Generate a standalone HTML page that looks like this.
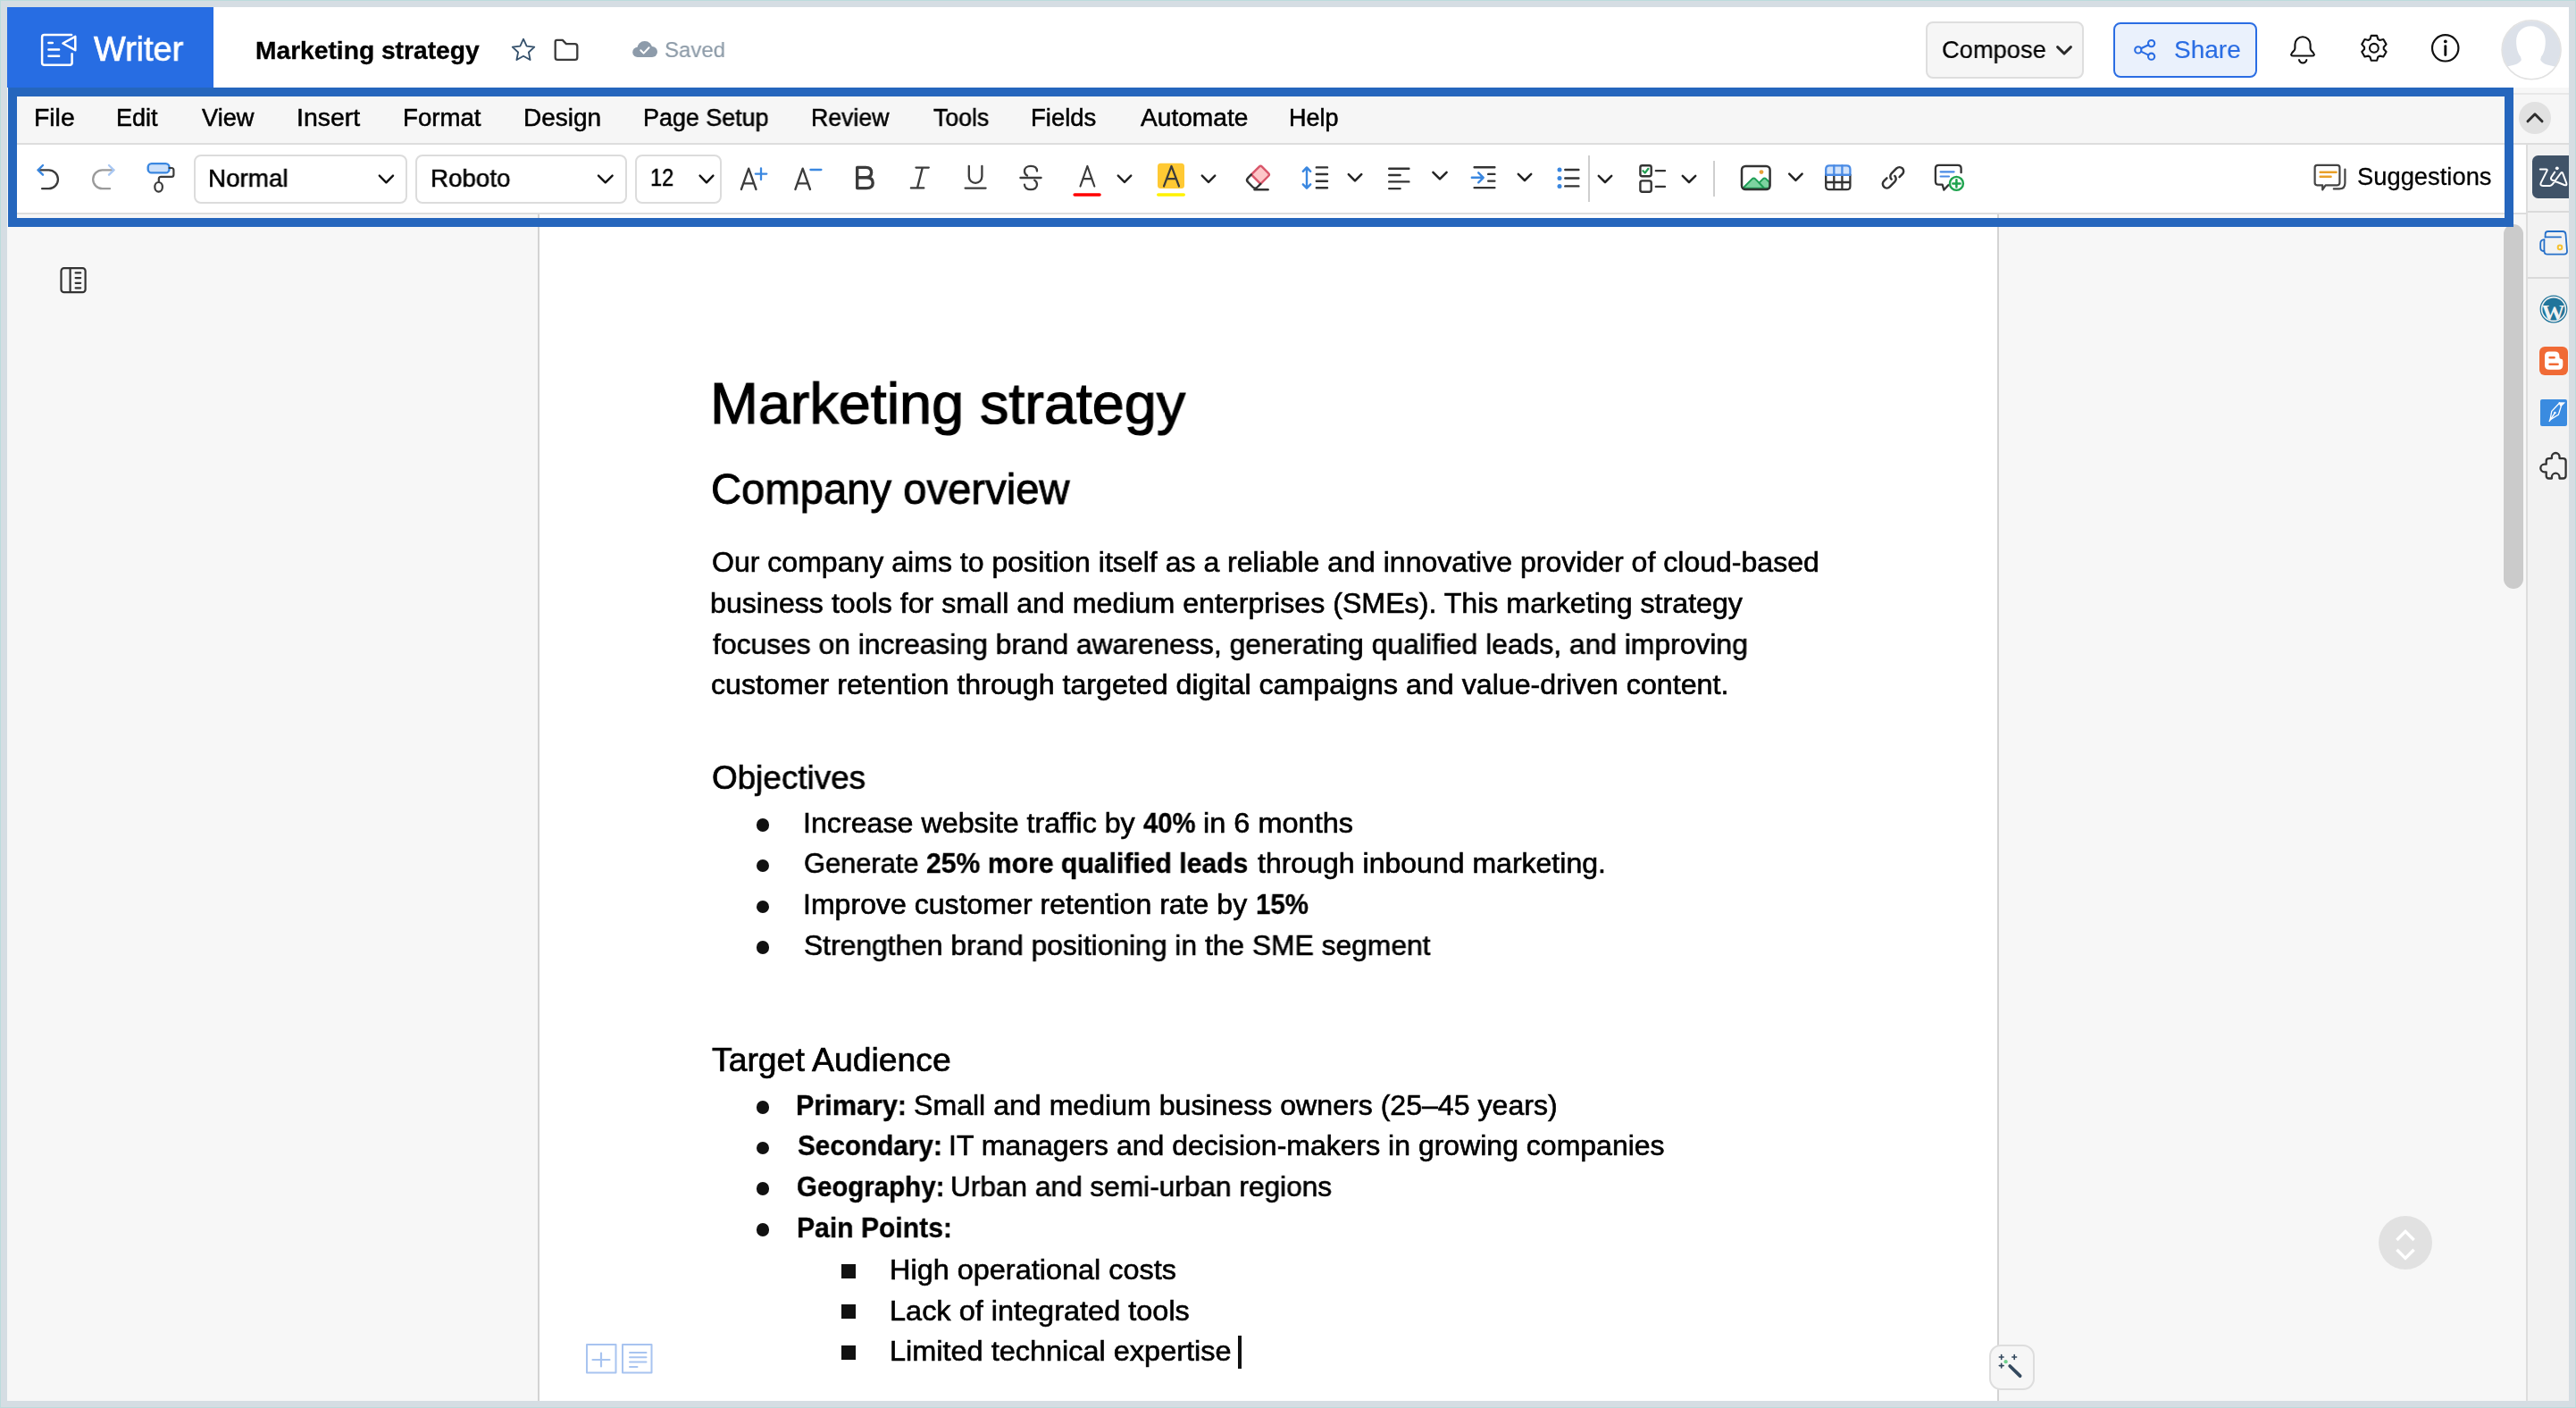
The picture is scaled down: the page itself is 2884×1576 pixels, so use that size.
<!DOCTYPE html>
<html><head><meta charset="utf-8"><title>Marketing strategy - Writer</title>
<style>
html,body{margin:0;padding:0;width:2884px;height:1576px;overflow:hidden;background:#D5DDE3;font-family:"Liberation Sans", sans-serif;}
.a{position:absolute;}
.t{position:absolute;white-space:nowrap;will-change:transform;transform-origin:0 0;}
b{font-weight:bold;}
svg{position:absolute;overflow:visible;}
</style></head><body>
<div class="a" style="left:0;top:0;width:2884px;height:1576px;box-sizing:border-box;border:1px solid #BCDCDC;"></div>
<!-- app area -->
<div class="a" style="left:8px;top:8px;width:2868px;height:1560px;background:#F7F7F7;"></div>
<!-- header -->
<div class="a" style="left:8px;top:8px;width:2868px;height:90px;background:#fff;"></div>
<div class="a" style="left:8px;top:8px;width:231px;height:90px;background:#276DE3;"></div>
<!-- compose button -->
<div class="a" style="left:2155.5px;top:24px;width:177.5px;height:64px;box-sizing:border-box;background:#F6F6F6;border:2px solid #DEDEDE;border-radius:8px;"></div>
<!-- share button -->
<div class="a" style="left:2366px;top:25px;width:161px;height:62px;box-sizing:border-box;background:#EAF1FC;border:2px solid #2A6DE3;border-radius:8px;"></div>
<!-- right strip next to outline -->
<div class="a" style="left:2814px;top:104px;width:62px;height:2px;background:#E8E8E8;"></div>
<div class="a" style="left:2814px;top:106px;width:62px;height:54px;background:#F6F6F6;"></div>
<div class="a" style="left:2814px;top:160px;width:62px;height:2px;background:#DDDDDD;"></div>
<div class="a" style="left:2820px;top:114px;width:36px;height:36px;border-radius:50%;background:#E1E1E1;"></div>
<!-- toolbar region right of outline (white) -->
<div class="a" style="left:2814px;top:162px;width:14px;height:76px;background:#fff;"></div>
<div class="a" style="left:2814px;top:238px;width:14px;height:2px;background:#DDDDDD;"></div>
<!-- right sidebar -->
<div class="a" style="left:2828px;top:162px;width:2px;height:1406px;background:#DDDDDD;"></div>
<div class="a" style="left:2830px;top:162px;width:46px;height:1406px;background:#F2F2F2;"></div>
<div class="a" style="left:2830px;top:236px;width:46px;height:2px;background:#DADADA;"></div>
<div class="a" style="left:2830px;top:310px;width:46px;height:2px;background:#DADADA;"></div>
<!-- page -->
<div class="a" style="left:602px;top:240px;width:2px;height:1328px;background:#D3D3D3;"></div>
<div class="a" style="left:604px;top:240px;width:1632px;height:1328px;background:#fff;"></div>
<div class="a" style="left:2236px;top:240px;width:2px;height:1328px;background:#D3D3D3;"></div>
<!-- scrollbar -->
<div class="a" style="left:2803px;top:251px;width:22px;height:408px;border-radius:11px;background:#CBCBCB;"></div>
<!-- toolbar outline block -->
<div class="a" style="left:19px;top:108px;width:2785px;height:52px;background:#F6F6F6;"></div>
<div class="a" style="left:19px;top:160px;width:2785px;height:2px;background:#DDDDDD;"></div>
<div class="a" style="left:19px;top:162px;width:2785px;height:76px;background:#fff;"></div>
<div class="a" style="left:19px;top:238px;width:2785px;height:2px;background:#DDDDDD;"></div>
<div class="a" style="left:9px;top:98px;width:2805px;height:156px;box-sizing:border-box;border:10px solid #2566BD;"></div>
<!-- dropdowns -->
<div class="a" style="left:216.5px;top:172.5px;width:239px;height:55px;box-sizing:border-box;border:2px solid #DCDCDC;border-radius:8px;"></div>
<div class="a" style="left:464.5px;top:172.5px;width:237px;height:55px;box-sizing:border-box;border:2px solid #DCDCDC;border-radius:8px;"></div>
<div class="a" style="left:710.5px;top:172.5px;width:97px;height:55px;box-sizing:border-box;border:2px solid #DCDCDC;border-radius:8px;"></div>
<!-- separators in toolbar -->
<div class="a" style="left:1778px;top:174px;width:2px;height:52px;background:#CFCFCF;"></div>
<div class="a" style="left:1917.5px;top:180px;width:2px;height:40px;background:#CFCFCF;"></div>
<!-- zia block -->
<div class="a" style="left:2835px;top:174px;width:41px;height:48px;background:#405368;border-radius:6.5px 0 0 6.5px;"></div>
<!-- blogger, pen bg -->
<div class="a" style="left:2843px;top:388px;width:32px;height:32px;background:#F06A35;border-radius:6px;"></div>
<div class="a" style="left:2844px;top:447px;width:30px;height:30px;background:#3A8BE0;border-radius:2px;"></div>
<!-- nav circle -->
<div class="a" style="left:2663px;top:1361px;width:60px;height:60px;border-radius:50%;background:#E1E1E1;"></div>
<!-- magic wand button -->
<div class="a" style="left:2226.5px;top:1505px;width:51px;height:51px;box-sizing:border-box;border:2px solid #DDDDDD;border-radius:13px;background:#F6F6F6;"></div>
<!-- bullets -->
<div class="a" style="left:846.5px;top:916px;width:14.5px;height:14.5px;border-radius:50%;background:#111;"></div>
<div class="a" style="left:846.5px;top:961.6px;width:14.5px;height:14.5px;border-radius:50%;background:#111;"></div>
<div class="a" style="left:846.5px;top:1007.5px;width:14.5px;height:14.5px;border-radius:50%;background:#111;"></div>
<div class="a" style="left:846.5px;top:1053.4px;width:14.5px;height:14.5px;border-radius:50%;background:#111;"></div>
<div class="a" style="left:846.5px;top:1232px;width:14.5px;height:14.5px;border-radius:50%;background:#111;"></div>
<div class="a" style="left:846.5px;top:1277.5px;width:14.5px;height:14.5px;border-radius:50%;background:#111;"></div>
<div class="a" style="left:846.5px;top:1323.2px;width:14.5px;height:14.5px;border-radius:50%;background:#111;"></div>
<div class="a" style="left:846.5px;top:1369.2px;width:14.5px;height:14.5px;border-radius:50%;background:#111;"></div>
<div class="a" style="left:942px;top:1414.5px;width:16px;height:16px;background:#111;"></div>
<div class="a" style="left:942px;top:1460px;width:16px;height:16px;background:#111;"></div>
<div class="a" style="left:942px;top:1505.5px;width:16px;height:16px;background:#111;"></div>
<!-- cursor -->
<div class="a" style="left:1386px;top:1495px;width:3.5px;height:37px;background:#111;"></div>

<svg style="left:0;top:0" width="2884" height="1576" viewBox="0 0 2884 1576" fill="none" stroke-linecap="round" stroke-linejoin="round">
<!-- logo -->
<g stroke="#fff" stroke-width="2.5">
<path d="M80.1,39 H49.6 Q47.1,39 47.1,41.5 V70.3 Q47.1,72.8 49.6,72.8 H78.1 Q80.6,72.8 80.6,70.3 V60.2"/>
<path d="M70.4,48.5 L84.3,40.8 L84.3,56.2 Z"/>
<path d="M54.4,48.1 H58.8 M54.4,55.5 H66.1 M54.4,62.7 H66.1"/>
</g>
<!-- star folder cloud -->
<path d="M586.00,43.70 L589.64,51.58 L598.27,52.61 L591.90,58.52 L593.58,67.04 L586.00,62.80 L578.42,67.04 L580.10,58.52 L573.73,52.61 L582.36,51.58 Z" stroke="#34506B" stroke-width="1.8"/>
<path d="M623.5,44.9 H629.8 L633.9,49.1 H643.6 Q646.3,49.1 646.3,51.8 V64.2 Q646.3,66.9 643.6,66.9 H624.4 Q621.7,66.9 621.7,64.2 V46.7 Q621.7,44.9 623.5,44.9 Z" stroke="#3A3A3A" stroke-width="2.3"/>
<g fill="#8D9BAA"><circle cx="713.8" cy="58.4" r="5.6"/><circle cx="721.8" cy="54.6" r="8.5"/><circle cx="730" cy="58" r="6"/><rect x="713.8" y="55" width="16.2" height="9"/></g>
<path d="M717.3,56.3 L720.6,59.6 L726.6,53.3" stroke="#fff" stroke-width="2"/>
<!-- compose chevron -->
<path d="M2303.6,52.6 L2311,60 L2318.4,52.6" stroke="#2a2a2a" stroke-width="3"/>
<!-- share icon -->
<g stroke="#2A6DE3" stroke-width="2.1"><circle cx="2408.6" cy="48.6" r="3.6"/><circle cx="2393.8" cy="55.9" r="3.6"/><circle cx="2408.6" cy="63.2" r="3.6"/>
<path d="M2397,54.2 L2405.4,50.2 M2397,57.6 L2405.4,61.6"/></g>
<!-- bell -->
<path d="M2569.4,54 V49.8 A8.6,8.6 0 0 1 2586.6,49.8 V54 Q2586.6,55.6 2588,57 L2589.8,59 Q2592.3,62.5 2588.5,62.5 H2567.5 Q2563.7,62.5 2566.2,59 L2568,57 Q2569.4,55.6 2569.4,54 Z" stroke="#111" stroke-width="2.1"/>
<path d="M2574,67 A4.3,4.3 0 0 0 2582.4,67" stroke="#111" stroke-width="2"/>
<!-- gear -->
<path d="M2653.47,43.84 L2654.68,39.87 L2661.12,39.87 L2662.33,43.84 L2664.31,44.98 L2668.36,44.05 L2671.58,49.62 L2668.74,52.66 L2668.74,54.94 L2671.58,57.98 L2668.36,63.55 L2664.31,62.62 L2662.33,63.76 L2661.12,67.73 L2654.68,67.73 L2653.47,63.76 L2651.49,62.62 L2647.44,63.55 L2644.22,57.98 L2647.06,54.94 L2647.06,52.66 L2644.22,49.62 L2647.44,44.05 L2651.49,44.98 Z" stroke="#111" stroke-width="2.1"/>
<circle cx="2657.9" cy="53.8" r="4.9" stroke="#111" stroke-width="2.1"/>
<!-- info -->
<circle cx="2737.7" cy="53.8" r="14.7" stroke="#111" stroke-width="2.2"/>
<circle cx="2737.8" cy="46.4" r="1.9" fill="#111"/>
<path d="M2737.8,51.6 V61.6" stroke="#111" stroke-width="2.9"/>
<!-- avatar -->
<defs><clipPath id="avc"><circle cx="2834.1" cy="55.8" r="32.6"/></clipPath></defs>
<circle cx="2834.1" cy="55.8" r="32.6" fill="#DCE1E9"/>
<path clip-path="url(#avc)" d="M2833.5,29.2 C2843,29.2 2849.8,36 2849.8,46 C2849.8,54 2848,60 2845,63.5 L2844.2,67 C2846,70.5 2850,72.5 2856,73.5 L2864,75.5 V92 H2803 V75.5 L2811,73.5 C2817,72.5 2821,70.5 2822.9,67 L2822,63.5 C2819,60 2817.1,54 2817.1,46 C2817.1,36 2824,29.2 2833.5,29.2 Z" fill="#fff"/>
<circle cx="2834.1" cy="55.8" r="33" stroke="#E2E2E2" stroke-width="1.6"/>
<!-- collapse chevron -->
<path d="M2830,135.8 L2838,127.8 L2846,135.8" stroke="#2d2d2d" stroke-width="3"/>

<!-- toolbar: undo redo painter -->
<path d="M47.1,211.2 H54.5 A10.45,10.45 0 0 0 54.5,190.3 H42.8" stroke="#3B3B3B" stroke-width="2.3"/>
<path d="M48,185 L42.6,190.3 L48,195.7" stroke="#3A87E0" stroke-width="2.4"/>
<path d="M123,211.2 H114.6 A10.45,10.45 0 0 1 114.6,190.3 H127.3" stroke="#9A9A9A" stroke-width="2.3"/>
<path d="M122,185 L127.4,190.3 L122,195.7" stroke="#A9C8F4" stroke-width="2.4"/>
<rect x="165.7" y="183.1" width="23.8" height="10.3" rx="4" fill="#CCE0FA" stroke="#3A87E0" stroke-width="2.4"/>
<path d="M189.6,188 H192 Q194.4,188 194.4,190.4 V195.4 Q194.4,197.8 192,197.8 H180.2 Q177.8,197.8 177.8,200.2 V203.6" stroke="#3B3B3B" stroke-width="2.2"/>
<ellipse cx="177.6" cy="209.3" rx="4.3" ry="5.3" stroke="#3B3B3B" stroke-width="2.2"/>
<!-- dropdown chevrons -->
<g stroke="#111" stroke-width="2.4">
<path d="M424.8,196.6 L432.4,204.3 L440,196.6"/>
<path d="M670,196.6 L677.8,204.3 L685.6,196.6"/>
<path d="M783.6,196.6 L791,204.3 L798.4,196.6"/>
</g>
<g stroke="#3B3B3B" stroke-width="2.3">
<!-- A+ A- -->
<path d="M829.9,212 L838.2,188.6 L846.5,212 M832.7,205.3 H843.7"/>
<path d="M890.4,212 L898.7,188.6 L907,212 M893.2,205.3 H904.2"/>
<path d="M845.8,194.6 H858.3 M852,188.4 V201" stroke="#3A87E0"/>
<path d="M907.4,190 H919.4" stroke="#3A87E0"/>
<!-- B -->
<path d="M959.7,187.4 H969.2 Q975.6,187.4 975.6,193.1 Q975.6,198.8 969.2,198.8 H959.7 Z M959.7,198.8 H970.2 Q977.2,198.8 977.2,204.7 Q977.2,210.6 970.2,210.6 H959.7 Z" stroke-width="3.4"/>
<!-- I -->
<path d="M1025.5,187.6 H1039.8 M1019.9,210.4 H1034.3 M1032.8,187.6 L1027,210.4"/>
<!-- U -->
<path d="M1084.8,185.8 V197.6 A7.3,7.3 0 0 0 1099.4,197.6 V185.8 M1080.6,210.6 H1103.6"/>
<!-- S -->
<path d="M1142.4,199 H1165.6"/>
<path d="M1161,191.5 C1161,187.8 1158,185.9 1154,185.9 C1150,185.9 1147,188 1147,191.5 C1147,194 1148.3,195.6 1150,196.6"/>
<path d="M1158.2,201.6 C1160,202.8 1161,204.4 1161,206.6 C1161,210.2 1158,212.2 1154,212.2 C1150,212.2 1147,210.2 1147,206.6"/>
<!-- font color -->
<path d="M1209.5,208.5 L1217.4,186 L1225.3,208.5 M1212.3,200.2 H1222.5" stroke-width="2.2"/>
</g>
<rect x="1201.4" y="216.2" width="31.4" height="3.6" rx="1.8" fill="#FF0000"/>
<rect x="1296" y="182.7" width="30" height="28.3" rx="3.5" fill="#FFC933"/>
<path d="M1303,208.5 L1311.5,186 L1320,208.5 M1306,200.2 H1317" stroke="#3B3B3B" stroke-width="2.2"/>
<rect x="1295" y="216.2" width="32" height="3.6" rx="1.8" fill="#FFF200"/>
<g stroke="#222" stroke-width="2.5">
<path d="M1251.8,196.6 L1259,203.8 L1266.2,196.6"/>
<path d="M1345.8,196.6 L1353,203.8 L1360.2,196.6"/>
<path d="M1509.8,195.2 L1517,202.4 L1524.2,195.2"/>
<path d="M1604.4,192.8 L1612,200.4 L1619.6,192.8"/>
<path d="M1699.8,194.8 L1707,202 L1714.2,194.8"/>
<path d="M1789.8,196.8 L1797,204 L1804.2,196.8"/>
<path d="M1883.8,196.8 L1891,204 L1898.2,196.8"/>
<path d="M2003.2,194.6 L2010.4,201.8 L2017.6,194.6"/>
</g>
<!-- eraser -->
<g transform="translate(1411.3,195.4) rotate(-45)">
<path d="M-7.35,-7.35 H5.1 Q7.35,-7.35 7.35,-5.1 V5.1 Q7.35,7.35 5.1,7.35 H-7.35 Z" fill="#FDC6C8" stroke="#D9566A" stroke-width="2.4"/>
<path d="M-7.35,-7.35 H-12.6 Q-16,-7.35 -16,-3.95 V3.95 Q-16,7.35 -12.6,7.35 H-7.35" stroke="#333" stroke-width="2.4"/>
</g>
<path d="M1404.6,212.3 H1419.6" stroke="#333" stroke-width="2.4"/>
<!-- line spacing -->
<path d="M1463,187.8 V210.3 M1458.8,191.8 L1463,187.4 L1467.2,191.8 M1458.8,206.3 L1463,210.7 L1467.2,206.3" stroke="#3A87E0" stroke-width="2.4"/>
<path d="M1473.8,187.4 H1486 M1473.8,195 H1486 M1473.8,202.7 H1486 M1473.8,210.3 H1486" stroke="#333" stroke-width="2.4"/>
<!-- align left -->
<path d="M1555.2,188.7 H1577.4 M1555.2,196 H1567.6 M1555.2,203.4 H1577.4 M1555.2,211.1 H1567.6" stroke="#333" stroke-width="2.4"/>
<!-- indent -->
<path d="M1650.6,187.3 H1673.4 M1666.2,194.9 H1673.4 M1666.2,202.6 H1673.4 M1650.6,210.1 H1673.4" stroke="#333" stroke-width="2.4"/>
<path d="M1647.8,198.8 H1660.5 M1655.2,193.3 L1660.7,198.8 L1655.2,204.3" stroke="#3A87E0" stroke-width="2.4"/>
<!-- bullets -->
<g fill="#3A87E0"><circle cx="1746" cy="190" r="2.5"/><circle cx="1746" cy="199.5" r="2.5"/><circle cx="1746" cy="208.4" r="2.5"/></g>
<path d="M1752.3,190 H1767.4 M1752.3,199.5 H1767.4 M1752.3,208.4 H1767.4" stroke="#333" stroke-width="2.4"/>
<!-- checklist -->
<rect x="1836.4" y="185.3" width="12.3" height="12" rx="2.2" stroke="#333" stroke-width="2.4"/>
<rect x="1836.4" y="202.4" width="12.3" height="12.3" rx="2.2" stroke="#333" stroke-width="2.4"/>
<path d="M1839.4,191.2 L1841.7,193.5 L1845.4,188.8" stroke="#1E9E50" stroke-width="2.2"/>
<path d="M1853.8,191.2 H1864 M1853.8,208.9 H1864" stroke="#333" stroke-width="2.3"/>
<!-- image -->
<path d="M1951.2,210.8 L1961.3,200.6 Q1963.4,198.5 1965.5,200.6 L1975.4,210.6 Z" fill="#7DD3A0" stroke="#1E9E56" stroke-width="2"/>
<path d="M1969.5,204.6 L1973.4,200.6 Q1975.5,198.5 1977.6,200.6 L1981,204 V210.8 H1975.2 Z" fill="#7DD3A0" stroke="#1E9E56" stroke-width="2"/>
<rect x="1950" y="186" width="31.6" height="26" rx="4.2" stroke="#333" stroke-width="2.5"/>
<circle cx="1972" cy="192.6" r="2.4" fill="#E8A03A"/>
<!-- table -->
<path d="M2048.2,185.3 H2067.4 Q2071.4,185.3 2071.4,189.3 V195.8 H2044.2 V189.3 Q2044.2,185.3 2048.2,185.3 Z" fill="#D2E3FA" stroke="#4A8BE5" stroke-width="2.3"/>
<path d="M2044.2,195.8 V208.2 Q2044.2,212.2 2048.2,212.2 H2067.4 Q2071.4,212.2 2071.4,208.2 V195.8 M2044.2,204 H2071.4 M2053.3,195.8 V212.2 M2062.4,195.8 V212.2" stroke="#333" stroke-width="2.3"/>
<path d="M2053.3,185.3 V195.8 M2062.4,185.3 V195.8" stroke="#4A8BE5" stroke-width="2.3"/>
<path d="M2044.2,195.8 H2071.4" stroke="#4A8BE5" stroke-width="2.3"/>
<!-- link -->
<g transform="translate(2119.5,198.8) rotate(-45)" stroke="#333" stroke-width="2.5">
<path d="M-2.6,0 A4.6,4.6 0 0 1 2,-4.6 H10 A4.6,4.6 0 0 1 10,4.6 H5.4"/>
<path d="M2.6,0 A4.6,4.6 0 0 1 -2,4.6 H-10 A4.6,4.6 0 0 1 -10,-4.6 H-5.4"/>
</g>
<!-- comment add -->
<path d="M2195.6,193.2 V188.6 Q2195.6,184.9 2191.9,184.9 H2170.6 Q2166.9,184.9 2166.9,188.6 V203 Q2166.9,206.7 2170.6,206.7 H2174.6 L2176.4,212.6 L2181.2,207.2" stroke="#333" stroke-width="2.3"/>
<path d="M2172.6,192.3 H2187.6 M2172.6,197.5 H2182" stroke="#4A8BE5" stroke-width="2.2"/>
<circle cx="2190.4" cy="205.4" r="7.5" fill="#fff" stroke="#1EA34E" stroke-width="2.4"/>
<path d="M2186.3,205.4 H2194.5 M2190.4,201.3 V209.5" stroke="#1EA34E" stroke-width="2.5"/>
<!-- suggestions icon -->
<path d="M2594.2,184.9 H2616.8 Q2619.4,184.9 2619.4,187.5 V204.6 Q2619.4,207.3 2616.8,207.3 H2603.6 L2600.2,212.4 V207.3 H2594.2 Q2591.6,207.3 2591.6,204.6 V187.5 Q2591.6,184.9 2594.2,184.9 Z" stroke="#444" stroke-width="2.2"/>
<path d="M2625.4,189.6 V205 Q2625.4,211.4 2619,211.4 H2612.8" stroke="#444" stroke-width="2.2"/>
<path d="M2597.6,192.8 H2615.6 M2597.6,197.7 H2609.6" stroke="#E9A028" stroke-width="2.4"/>

<!-- sidebar icons -->
<path d="M2843.8,189.6 H2850.4 Q2852.4,189.6 2851.4,191.4 L2844.8,204.4 Q2843.2,207.9 2847,207.9 H2854.6 Q2856.6,207.9 2857.8,206.2 L2866.8,194 Q2868.4,191.8 2869.3,194.4 L2873.3,205 Q2874.2,208.2 2870.8,207 L2857.8,201.8 Q2855,200.6 2856.4,198.2 L2860.2,192.6" stroke="#fff" stroke-width="2"/>
<circle cx="2862.8" cy="188.3" r="1.9" fill="#fff"/>
<g stroke="#2670C9" stroke-width="1.8">
<path d="M2849.6,265.4 V262.3 Q2849.6,259 2852.9,259 H2869 Q2872.2,259 2872.5,262.3 L2874,281 Q2874.2,284.6 2870.6,284.6 H2852.2 Q2848.4,284.6 2848.4,280.9 V268.4"/>
<path d="M2849.6,265.4 H2867"/>
<path d="M2848.4,268.2 Q2844.2,268.4 2844.2,272.4 V277.4 Q2844.2,280.8 2848.4,281"/>
</g>
<circle cx="2866" cy="276.9" r="2.3" stroke="#F6C12F" stroke-width="2"/>
<circle cx="2859" cy="346" r="14.8" stroke="#21759B" stroke-width="1.2"/>
<circle cx="2859" cy="346" r="12.6" fill="#21759B"/>
<defs><clipPath id="wpc"><circle cx="2859" cy="346" r="12.6"/></clipPath></defs>
<text clip-path="url(#wpc)" x="2858.6" y="358.6" font-family="Liberation Serif" font-weight="bold" font-size="26" text-anchor="middle" fill="#F2F2F2" stroke="none">W</text>
<path d="M2854,393.6 H2860.4 Q2865.4,393.6 2865.4,398.6 V399.5 Q2865.4,401.8 2867.2,401.8 Q2869.3,401.8 2869.3,404 V408.8 Q2869.3,413.8 2864.3,413.8 H2854 Q2849,413.8 2849,408.8 V398.6 Q2849,393.6 2854,393.6 Z" fill="#fff"/>
<path d="M2854.6,400.3 H2859.6 M2854.6,407.8 H2863.6" stroke="#F06A35" stroke-width="2.6"/>
<path d="M2865.6,451 L2856.8,460.2 L2855,469.8 L2864.4,464 L2867.4,454.6 Z" stroke="#fff" stroke-width="1.3" stroke-linejoin="miter"/>
<path d="M2865.2,450.8 H2871.4 L2867.4,454.8 Z" fill="#fff" stroke="#fff" stroke-width="0.8"/>
<path d="M2854.2,471.4 L2860.2,462.4" stroke="#fff" stroke-width="1.4"/>
<circle cx="2860.4" cy="462" r="1.3" fill="#fff"/>
<path d="M2853.7,513.1 H2856.9 V511.3 A4.3,4.3 0 0 1 2865.5,511.3 V513.1 H2869.6 Q2872.6,513.1 2872.6,516.1 V532.5 Q2872.6,535.5 2869.6,535.5 H2865.5 V534 A4.3,4.3 0 0 0 2856.9,534 V535.5 H2853.7 Q2850.7,535.5 2850.7,532.5 V528.3 H2848.6 A4.3,4.3 0 0 1 2848.6,519.7 H2850.7 V516.1 Q2850.7,513.1 2853.7,513.1 Z" stroke="#333" stroke-width="2.3"/>
<!-- doc outline icon -->
<rect x="68.5" y="300.1" width="27.1" height="27.1" rx="3.2" stroke="#333" stroke-width="2.2"/>
<path d="M78.6,300.5 V327 M84.6,305.4 H90.2 M84.6,311.1 H90.2 M84.6,316.8 H90.2 M84.6,322.3 H90.2" stroke="#333" stroke-width="2.2"/>
<!-- block icons -->
<g stroke="#A8C4F0" stroke-width="2">
<rect x="657" y="1505" width="32.5" height="31.5"/>
<rect x="697" y="1505" width="32.5" height="31.5"/>
<path d="M663.5,1522 H682.5 M673,1514.5 V1529.5" stroke-width="2.2"/>
<path d="M705,1514 H723.5 M705,1519.2 H723.5 M705,1524.4 H723.5 M705,1530 H713.5"/>
</g>
<!-- nav chevrons -->
<path d="M2683.4,1388 L2693,1378.4 L2702.6,1388 M2683.4,1398.8 L2693,1408.4 L2702.6,1398.8" stroke="#fff" stroke-width="3.4" stroke-linecap="butt" stroke-linejoin="miter"/>
<!-- magic wand -->
<path d="M2250.2,1529 L2261.6,1540.2" stroke="#34495E" stroke-width="3.8"/>
<circle cx="2245.6" cy="1524.2" r="2.1" fill="#6FD08C"/>
<path d="M2240.7,1516.6 V1521.4 M2238.3,1519 H2243.1 M2255.2,1516.6 V1521.4 M2252.8,1519 H2257.6 M2240.7,1526.2 V1531 M2238.3,1528.6 H2243.1" stroke="#34495E" stroke-width="1.6"/>
</svg>
<div class="t" style="left:105.00px;top:35.83px;font-size:38px;line-height:38px;color:#fff;-webkit-text-stroke:0.72px #fff;transform:scaleX(0.9964);">Writer</div>
<div class="t" style="left:285.99px;top:42.90px;font-size:28px;line-height:28px;color:#000;-webkit-text-stroke:0.32px #000;transform:scaleX(1.0065);"><b>Marketing strategy</b></div>
<div class="t" style="left:743.52px;top:43.76px;font-size:24.5px;line-height:24.5px;color:#8D9BA8;-webkit-text-stroke:0.19px #8D9BA8;transform:scaleX(0.9802);">Saved</div>
<div class="t" style="left:2173.51px;top:41.72px;font-size:27.5px;line-height:27.5px;color:#000;-webkit-text-stroke:0.21px #000;transform:scaleX(0.9923);">Compose</div>
<div class="t" style="left:2433.50px;top:42.20px;font-size:28px;line-height:28px;color:#2A6DE3;-webkit-text-stroke:0.16px #2A6DE3;transform:scaleX(0.9994);">Share</div>
<div class="t" style="left:38.40px;top:119.24px;font-size:27px;line-height:27px;color:#000;-webkit-text-stroke:0.51px #000;transform:scaleX(1.0496);">File</div>
<div class="t" style="left:130.00px;top:119.24px;font-size:27px;line-height:27px;color:#000;-webkit-text-stroke:0.51px #000;transform:scaleX(0.9995);">Edit</div>
<div class="t" style="left:226.00px;top:119.24px;font-size:27px;line-height:27px;color:#000;-webkit-text-stroke:0.51px #000;transform:scaleX(1.0079);">View</div>
<div class="t" style="left:332.39px;top:119.24px;font-size:27px;line-height:27px;color:#000;-webkit-text-stroke:0.51px #000;transform:scaleX(1.0526);">Insert</div>
<div class="t" style="left:450.95px;top:119.24px;font-size:27px;line-height:27px;color:#000;-webkit-text-stroke:0.51px #000;transform:scaleX(1.0237);">Format</div>
<div class="t" style="left:585.93px;top:119.24px;font-size:27px;line-height:27px;color:#000;-webkit-text-stroke:0.51px #000;transform:scaleX(1.0367);">Design</div>
<div class="t" style="left:720.41px;top:119.24px;font-size:27px;line-height:27px;color:#000;-webkit-text-stroke:0.51px #000;transform:scaleX(0.9964);">Page Setup</div>
<div class="t" style="left:907.62px;top:119.24px;font-size:27px;line-height:27px;color:#000;-webkit-text-stroke:0.51px #000;transform:scaleX(0.9882);">Review</div>
<div class="t" style="left:1045.00px;top:119.24px;font-size:27px;line-height:27px;color:#000;-webkit-text-stroke:0.51px #000;transform:scaleX(0.9883);">Tools</div>
<div class="t" style="left:1154.46px;top:119.24px;font-size:27px;line-height:27px;color:#000;-webkit-text-stroke:0.51px #000;transform:scaleX(1.0184);">Fields</div>
<div class="t" style="left:1277.00px;top:119.24px;font-size:27px;line-height:27px;color:#000;-webkit-text-stroke:0.51px #000;transform:scaleX(1.0415);">Automate</div>
<div class="t" style="left:1443.30px;top:119.24px;font-size:27px;line-height:27px;color:#000;-webkit-text-stroke:0.51px #000;">Help</div>
<div class="t" style="left:232.91px;top:185.60px;font-size:28px;line-height:28px;color:#000;-webkit-text-stroke:0.53px #000;transform:scaleX(0.9929);">Normal</div>
<div class="t" style="left:481.52px;top:185.60px;font-size:28px;line-height:28px;color:#000;-webkit-text-stroke:0.53px #000;transform:scaleX(0.9907);">Roboto</div>
<div class="t" style="left:728.05px;top:186.44px;font-size:27px;line-height:27px;color:#000;-webkit-text-stroke:0.51px #000;transform:scaleX(0.8736);">12</div>
<div class="t" style="left:2638.99px;top:184.54px;font-size:27px;line-height:27px;color:#000;-webkit-text-stroke:0.26px #000;transform:scaleX(1.0129);">Suggestions</div>
<div class="t" style="left:794.82px;top:418.98px;font-size:65px;line-height:65px;color:#000;-webkit-text-stroke:1.23px #000;transform:scaleX(0.9952);">Marketing strategy</div>
<div class="t" style="left:796.41px;top:523.99px;font-size:47.5px;line-height:47.5px;color:#000;-webkit-text-stroke:0.90px #000;transform:scaleX(0.9940);">Company overview</div>
<div class="t" style="left:796.50px;top:612.91px;font-size:32px;line-height:32px;color:#000;-webkit-text-stroke:0.61px #000;transform:scaleX(1.0015);">Our company aims to position itself as a reliable and innovative provider of cloud-based</div>
<div class="t" style="left:795.49px;top:658.74px;font-size:32px;line-height:32px;color:#000;-webkit-text-stroke:0.61px #000;transform:scaleX(1.0051);">business tools for small and medium enterprises (SMEs). This marketing strategy</div>
<div class="t" style="left:797.50px;top:704.57px;font-size:32px;line-height:32px;color:#000;-webkit-text-stroke:0.61px #000;transform:scaleX(0.9945);">focuses on increasing brand awareness, generating qualified leads, and improving</div>
<div class="t" style="left:796.49px;top:750.40px;font-size:32px;line-height:32px;color:#000;-webkit-text-stroke:0.61px #000;transform:scaleX(1.0055);">customer retention through targeted digital campaigns and value-driven content.</div>
<div class="t" style="left:796.50px;top:851.68px;font-size:37px;line-height:37px;color:#000;-webkit-text-stroke:0.70px #000;transform:scaleX(0.9957);">Objectives</div>
<div class="t" style="left:898.99px;top:904.71px;font-size:32px;line-height:32px;color:#000;-webkit-text-stroke:0.61px #000;transform:scaleX(1.0064);">Increase website traffic by</div>
<div class="t" style="left:1279.60px;top:904.71px;font-size:32px;line-height:32px;color:#000;-webkit-text-stroke:0.36px #000;transform:scaleX(0.9152);"><b>40%</b></div>
<div class="t" style="left:1346.97px;top:904.71px;font-size:32px;line-height:32px;color:#000;-webkit-text-stroke:0.61px #000;transform:scaleX(1.0159);">in 6 months</div>
<div class="t" style="left:900.04px;top:950.31px;font-size:32px;line-height:32px;color:#000;-webkit-text-stroke:0.61px #000;transform:scaleX(0.9626);">Generate</div>
<div class="t" style="left:1036.56px;top:950.31px;font-size:32px;line-height:32px;color:#000;-webkit-text-stroke:0.36px #000;transform:scaleX(0.9426);"><b>25% more qualified leads</b></div>
<div class="t" style="left:1408.40px;top:950.31px;font-size:32px;line-height:32px;color:#000;-webkit-text-stroke:0.61px #000;transform:scaleX(1.0008);">through inbound marketing.</div>
<div class="t" style="left:899.00px;top:996.21px;font-size:32px;line-height:32px;color:#000;-webkit-text-stroke:0.61px #000;transform:scaleX(1.0020);">Improve customer retention rate by</div>
<div class="t" style="left:1405.76px;top:996.21px;font-size:32px;line-height:32px;color:#000;-webkit-text-stroke:0.36px #000;transform:scaleX(0.9222);"><b>15%</b></div>
<div class="t" style="left:900.01px;top:1042.11px;font-size:32px;line-height:32px;color:#000;-webkit-text-stroke:0.61px #000;transform:scaleX(0.9934);">Strengthen brand positioning in the SME segment</div>
<div class="t" style="left:796.80px;top:1168.08px;font-size:37px;line-height:37px;color:#000;-webkit-text-stroke:0.70px #000;transform:scaleX(1.0089);">Target Audience</div>
<div class="t" style="left:891.49px;top:1220.71px;font-size:32px;line-height:32px;color:#000;-webkit-text-stroke:0.36px #000;transform:scaleX(0.9546);"><b>Primary:</b></div>
<div class="t" style="left:1022.70px;top:1220.71px;font-size:32px;line-height:32px;color:#000;-webkit-text-stroke:0.61px #000;transform:scaleX(1.0029);">Small and medium business owners (25–45 years)</div>
<div class="t" style="left:892.90px;top:1266.21px;font-size:32px;line-height:32px;color:#000;-webkit-text-stroke:0.36px #000;transform:scaleX(0.9282);"><b>Secondary:</b></div>
<div class="t" style="left:1061.90px;top:1266.21px;font-size:32px;line-height:32px;color:#000;-webkit-text-stroke:0.61px #000;">IT managers and decision-makers in growing companies</div>
<div class="t" style="left:891.98px;top:1311.91px;font-size:32px;line-height:32px;color:#000;-webkit-text-stroke:0.36px #000;transform:scaleX(0.9209);"><b>Geography:</b></div>
<div class="t" style="left:1064.42px;top:1311.91px;font-size:32px;line-height:32px;color:#000;-webkit-text-stroke:0.61px #000;transform:scaleX(0.9880);">Urban and semi-urban regions</div>
<div class="t" style="left:891.52px;top:1357.91px;font-size:32px;line-height:32px;color:#000;-webkit-text-stroke:0.36px #000;transform:scaleX(0.9409);"><b>Pain Points:</b></div>
<div class="t" style="left:995.57px;top:1405.31px;font-size:32px;line-height:32px;color:#000;-webkit-text-stroke:0.61px #000;transform:scaleX(1.0139);">High operational costs</div>
<div class="t" style="left:995.57px;top:1450.71px;font-size:32px;line-height:32px;color:#000;-webkit-text-stroke:0.61px #000;transform:scaleX(1.0150);">Lack of integrated tools</div>
<div class="t" style="left:995.57px;top:1496.21px;font-size:32px;line-height:32px;color:#000;-webkit-text-stroke:0.61px #000;transform:scaleX(1.0145);">Limited technical expertise</div>
</body></html>
